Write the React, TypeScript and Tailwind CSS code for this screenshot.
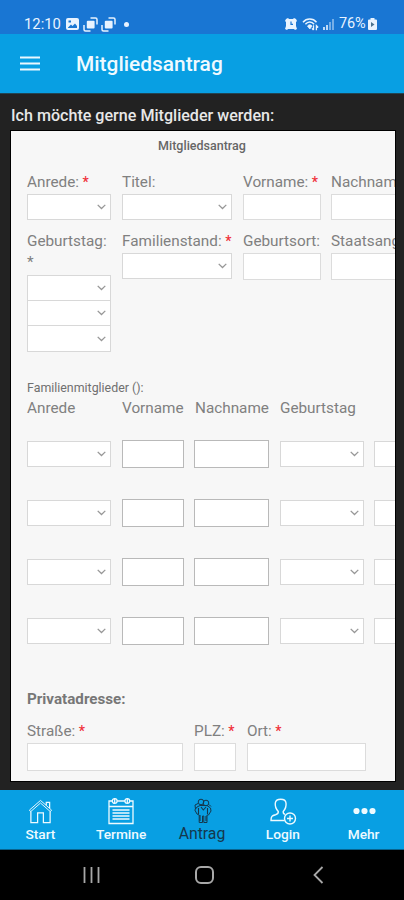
import type { ReactNode } from "react";

const familyRows = [1, 2, 3, 4];

function SelectField({ className = "" }: { className?: string }) {
  return (
    <div
      className={`flex shrink-0 items-center justify-end border border-[#d8d8d8] bg-white pr-[4px] ${className}`}
    >
      <svg width="9" height="6" viewBox="0 0 9 6" fill="none">
        <path d="M0.7 0.9 4.5 4.5 8.3 0.9" stroke="#979797" strokeWidth="1.3" />
      </svg>
    </div>
  );
}

function TextField({
  className = "",
  dark,
}: {
  className?: string;
  dark?: boolean;
}) {
  return (
    <div
      className={`shrink-0 border bg-white ${dark ? "border-[#b9b9b9]" : "border-[#dcdcdc]"} ${className}`}
    />
  );
}

function Label({
  children,
  required,
  className = "",
}: {
  children: ReactNode;
  required?: boolean;
  className?: string;
}) {
  return (
    <p
      className={`h-[21px] whitespace-nowrap text-[15.3px] leading-[21px] text-[#808080] ${className}`}
    >
      {children}
      {required && (
        <span className="text-[14px] font-medium text-[#f0303a]"> *</span>
      )}
    </p>
  );
}

function StatusBar() {
  return (
    <div className="flex h-[34px] items-start justify-between bg-[#1976d3] pt-[14px] pr-[27px] pl-[24px] text-[#e8f3ff]">
      <div className="flex h-[20px] items-center">
        <span className="w-[37px] text-[14.8px] leading-[20px]">12:10</span>
        <svg className="ml-[5px]" width="13" height="12" viewBox="0 0 13 12">
          <rect width="13" height="12" rx="2" fill="currentColor" />
          <path d="M2 9.5 5 6.5 6.5 8 9 5.5 11 8V10H2Z" fill="#1976d3" />
          <rect x="2.5" y="2.5" width="2.5" height="2" fill="#1976d3" />
        </svg>
        <CopyIcon className="ml-[4px]" />
        <CopyIcon className="ml-[3px]" />
        <span className="ml-[8px] size-[5px] rounded-full bg-[#e8f3ff]" />
      </div>
      <div className="flex h-[20px] items-center">
        <svg width="12" height="12" viewBox="0 0 12 12">
          <path d="M1 1 3 0 4 1H8L9 0 11 1 12 3 11 4V8L12 11 10 12 9 11H3L2 12 0 11 1 8V4L0 3Z" fill="currentColor" />
          <path d="M6 3.5V6.3H8" stroke="#1976d3" strokeWidth="1.2" fill="none" />
        </svg>
        <svg className="ml-[5px]" width="17" height="13" viewBox="0 0 17 13" fill="none" stroke="currentColor">
          <path d="M1 4.2C4.5 0 11 0 14.5 4.2" strokeWidth="1.5" />
          <path d="M3.4 6.2C5.8 3.2 9.7 3.2 12.1 6.2" strokeWidth="1.4" />
          <path d="M5.5 8C7 6.4 8.6 6.4 10 8L7.8 11Z" fill="currentColor" strokeWidth="0.8" />
          <path d="M11.5 7.3V12M9.9 10.4 11.5 12M14.4 12.3V7.6L16.2 9.5" strokeWidth="1.3" />
        </svg>
        <svg className="ml-[4px]" width="11" height="11" viewBox="0 0 11 11" fill="currentColor">
          <path d="M0 8H2V11H0ZM3 6H5V11H3Z" opacity="0.8" />
          <path d="M6 3H8V11H6ZM9 0H11V11H9Z" opacity="0.45" />
        </svg>
        <span className="ml-[5px] w-[28px] whitespace-nowrap text-[14.5px] leading-[20px] tracking-[-0.2px]">
          76%
        </span>
        <svg className="ml-px" width="9" height="12" viewBox="0 0 9 12">
          <path d="M2.5 0H6.5V1.5H8Q9 1.5 9 2.5V11Q9 12 8 12H1Q0 12 0 11V2.5Q0 1.5 1 1.5H2.5Z" fill="currentColor" />
          <path d="M3 4 6.5 6.5 3 9Z" fill="#4c7390" />
        </svg>
      </div>
    </div>
  );
}

function CopyIcon({ className = "" }: { className?: string }) {
  return (
    <svg className={className} width="15" height="15" viewBox="0 0 15 15">
      <rect x="3.8" y="3.8" width="7.8" height="7.8" rx="1" fill="currentColor" />
      <path d="M7.5 1H12.5Q14 1 14 2.5V7.5M1 8V12.5Q1 14 2.5 14H7.5" fill="none" stroke="currentColor" strokeWidth="1.5" />
    </svg>
  );
}

function NavItem({
  label,
  active,
  children,
}: {
  label: string;
  active?: boolean;
  children: ReactNode;
}) {
  return (
    <div
      className={`flex flex-1 flex-col items-center pt-[7px] ${active ? "text-[#15384d]" : "text-[#eefaff]"}`}
    >
      <div className="flex h-[28px] items-center justify-center">{children}</div>
      <span
        className={`leading-[18px] whitespace-nowrap ${active ? "text-[15.8px]" : "text-[13.7px] font-medium"}`}
      >
        {label}
      </span>
    </div>
  );
}

function BottomNav() {
  return (
    <nav className="flex h-[60px] border-b border-[#08648f] bg-[#089fe3]">
      <NavItem label="Start">
        <svg className="mt-px" width="25" height="25" viewBox="0 0 26 26" fill="none" stroke="currentColor" strokeWidth="1.3">
          <path d="M1.5 11.5 13 1.5 24.5 11.5 23.3 13.2 13 4.2 2.7 13.2Z" strokeWidth="1" />
          <path d="M3 13V24.5H10V14.5H16V24.5H23V13" />
          <path d="M19 6.5V3.5H22.5V9.7" />
        </svg>
      </NavItem>
      <NavItem label="Termine">
        <svg width="26" height="28" viewBox="0 0 26 28" fill="none" stroke="currentColor" strokeWidth="1.3">
          <path d="M4.5 4H1V26.5H25V4H21.5M9 4H17M1 9.5H25" />
          <circle cx="6.7" cy="4" r="2.4" />
          <circle cx="19.3" cy="4" r="2.4" />
          <path d="M6.7 1V6M19.3 1V6" />
          <path d="M4.5 13H21.5M4.5 16H21.5M4.5 19H21.5M4.5 22H21.5" strokeWidth="1.7" />
        </svg>
      </NavItem>
      <NavItem label="Antrag" active>
        <svg className="ml-[2px]" width="20" height="26" viewBox="0 0 20 26" fill="none" stroke="currentColor" strokeWidth="1">
          <circle cx="8" cy="4" r="2.8" />
          <circle cx="13" cy="5" r="2.8" />
          <path d="M4 9 7 7.5H14L17.5 10 18 13 15.5 17 14 17V24.5H10.8V18H9.5V24.5H6.2V17L4 16 1.8 12Z" />
          <path d="M5.5 10V16M8 9 10.3 12 13 9M14.5 10V16M7 17V23M13 18V23" strokeWidth="1.1" />
          <path d="M5 5.5 2 7 2.5 11M16 6.5 18 8.5" />
        </svg>
      </NavItem>
      <NavItem label="Login">
        <svg className="ml-[2px]" width="27" height="27" viewBox="0 0 27 27" fill="none" stroke="currentColor" strokeWidth="1.4">
          <path d="M14.5 22.5H1C1 18.5 2 17.5 5.5 16.7 8.2 16 8.5 15 8.3 13.5 5.5 10.5 5 7.5 5.3 5 6 0 15.5 0 16 5 16.4 8 15.7 10.7 13.2 13.5 13.1 15 13.5 16 15 16.3" />
          <circle cx="20" cy="20.5" r="5.5" />
          <path d="M20 17.5V23.5M17 20.5H23" />
        </svg>
      </NavItem>
      <NavItem label="Mehr">
        <svg className="ml-px" width="23" height="8" viewBox="0 0 23 8" fill="currentColor">
          <circle cx="3.5" cy="4" r="3.1" />
          <circle cx="11.5" cy="4" r="3.1" />
          <circle cx="19.5" cy="4" r="3.1" />
        </svg>
      </NavItem>
    </nav>
  );
}

export default function App() {
  return (
    <div className="flex h-[900px] w-[404px] flex-col overflow-hidden bg-[#222222] font-['Roboto',sans-serif]">
      <StatusBar />
      <header className="flex h-[59px] items-center bg-[#089fe3] pl-[20px]">
        <svg width="20" height="16" viewBox="0 0 20 16" stroke="#e9f8ff" strokeWidth="1.9">
          <path d="M0 1.5H20M0 7.5H20M0 13.5H20" />
        </svg>
        <h1 className="mt-[2px] ml-[36px] text-[20.9px] font-medium text-[#effaff]">
          Mitgliedsantrag
        </h1>
      </header>

      <main className="flex h-[697px] flex-col border-t border-[#224553] px-[10px] pt-[11px]">
        <p className="h-[25px] pl-[1px] text-[16.1px] leading-[22px] font-medium text-[#e8e8e8]">
          Ich möchte gerne Mitglieder werden:
        </p>
        <section className="h-[652px] w-[386px] overflow-hidden border border-black bg-[#f7f7f7] pl-[16px] text-[#707070]">
          <h2 className="h-[41px] pt-[6px] pr-[18px] text-center text-[12.5px] leading-[17px] font-medium text-[#666666]">
            Mitgliedsantrag
          </h2>

          <div className="flex h-[59px] w-max">
            <div className="mr-[11px] w-[84px]">
              <Label required>Anrede:</Label>
              <SelectField className="mt-px h-[26px]" />
            </div>
            <div className="mr-[11px] w-[110px]">
              <Label>Titel:</Label>
              <SelectField className="mt-px h-[26px]" />
            </div>
            <div className="mr-[10px] w-[78px]">
              <Label required>Vorname:</Label>
              <TextField className="mt-px h-[26px]" />
            </div>
            <div className="w-[110px]">
              <Label required>Nachname:</Label>
              <TextField className="mt-px h-[26px]" />
            </div>
          </div>

          <div className="flex h-[147px] w-max">
            <div className="mr-[11px] w-[84px]">
              <Label>Geburtstag:</Label>
              <Label>*</Label>
              <SelectField className="mt-[2px] h-[26px]" />
              <SelectField className="-mt-px h-[26px]" />
              <SelectField className="-mt-px h-[27px]" />
            </div>
            <div className="mr-[11px] w-[110px]">
              <Label required>Familienstand:</Label>
              <SelectField className="mt-px h-[26px]" />
            </div>
            <div className="mr-[10px] w-[78px]">
              <Label>Geburtsort:</Label>
              <TextField className="mt-px h-[27px]" />
            </div>
            <div className="w-[130px]">
              <Label required>Staatsangehörigkeit:</Label>
              <TextField className="mt-px h-[27px]" />
            </div>
          </div>

          <p className="h-[20px] text-[12.4px] leading-[19px]">
            Familienmitglieder ():
          </p>
          <div className="flex h-[26px] w-max">
            <Label className="w-[95px]">Anrede</Label>
            <Label className="w-[73px]">Vorname</Label>
            <Label className="w-[85px]">Nachname</Label>
            <Label>Geburtstag</Label>
          </div>

          {familyRows.map((row) => (
            <div key={row} className="flex h-[59px] w-max items-center">
              <SelectField className="mr-[11px] h-[26px] w-[84px]" />
              <TextField dark className="mr-[10px] h-[28px] w-[62px]" />
              <TextField dark className="mr-[11px] h-[28px] w-[75px]" />
              <SelectField className="mr-[10px] h-[26px] w-[84px]" />
              <SelectField className="h-[26px] w-[84px]" />
            </div>
          ))}

          <h3 className="mt-[29px] h-[32px] text-[15.2px] leading-[21px] font-bold text-[#777777]">
            Privatadresse:
          </h3>
          <div className="flex gap-[11px]">
            <div className="w-[156px]">
              <Label required>Straße:</Label>
              <TextField className="mt-px h-[28px]" />
            </div>
            <div className="w-[42px]">
              <Label required>PLZ:</Label>
              <TextField className="mt-px h-[28px]" />
            </div>
            <div className="w-[119px]">
              <Label required>Ort:</Label>
              <TextField className="mt-px h-[28px]" />
            </div>
          </div>
        </section>
      </main>

      <BottomNav />
      <div className="flex h-[50px] items-center bg-black text-[#a8a8a8]">
        <svg className="ml-[83px]" width="17" height="18" viewBox="0 0 17 18" stroke="currentColor" strokeWidth="1.8">
          <path d="M1.5 1V17M8.5 1V17M15.5 1V17" />
        </svg>
        <span className="ml-[95px] h-[18px] w-[19px] rounded-[6px] border-2 border-[#a8a8a8]" />
        <svg className="ml-[99px]" width="11" height="18" viewBox="0 0 11 18" fill="none" stroke="currentColor" strokeWidth="1.8">
          <path d="M9.5 1 1.5 9 9.5 17" />
        </svg>
      </div>
    </div>
  );
}
